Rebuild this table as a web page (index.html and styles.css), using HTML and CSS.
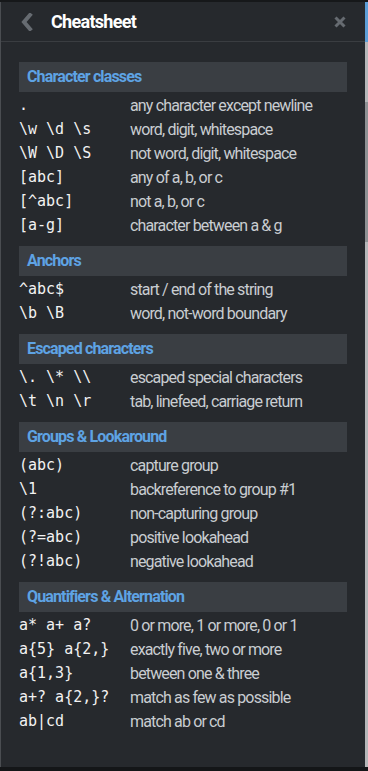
FILE: index.html
```html
<!DOCTYPE html>
<html>
<head>
<meta charset="utf-8">
<link rel="stylesheet" href="styles.css">
</head>
<body>
<div class="frame">
  <div class="topstrip"></div>
  <div class="main">
    <div class="panel">
      <header class="head">
        <svg class="back" width="14" height="18" viewBox="0 0 14 18"><path d="M10 2 L4 9 L10 16" fill="none" stroke="#666b71" stroke-width="4" stroke-linecap="square"/></svg>
        <span class="title">Cheatsheet</span>
        <svg class="close" width="12" height="12" viewBox="0 0 12 12"><path d="M1.5 1.5 L10.5 10.5 M10.5 1.5 L1.5 10.5" stroke="#666b71" stroke-width="3"/></svg>
      </header>
      <div class="content">
        <section class="group">
          <h2 class="ghead">Character classes</h2>
          <div class="row"><code>.</code><span>any character except newline</span></div>
          <div class="row"><code>\w \d \s</code><span>word, digit, whitespace</span></div>
          <div class="row"><code>\W \D \S</code><span>not word, digit, whitespace</span></div>
          <div class="row"><code>[abc]</code><span>any of a, b, or c</span></div>
          <div class="row"><code>[^abc]</code><span>not a, b, or c</span></div>
          <div class="row"><code>[a-g]</code><span>character between a &amp; g</span></div>
        </section>
        <section class="group">
          <h2 class="ghead">Anchors</h2>
          <div class="row"><code>^abc$</code><span>start / end of the string</span></div>
          <div class="row"><code>\b \B</code><span>word, not-word boundary</span></div>
        </section>
        <section class="group">
          <h2 class="ghead">Escaped characters</h2>
          <div class="row"><code>\. \* \\</code><span>escaped special characters</span></div>
          <div class="row"><code>\t \n \r</code><span>tab, linefeed, carriage return</span></div>
        </section>
        <section class="group">
          <h2 class="ghead">Groups &amp; Lookaround</h2>
          <div class="row"><code>(abc)</code><span>capture group</span></div>
          <div class="row"><code>\1</code><span>backreference to group #1</span></div>
          <div class="row"><code>(?:abc)</code><span>non-capturing group</span></div>
          <div class="row"><code>(?=abc)</code><span>positive lookahead</span></div>
          <div class="row"><code>(?!abc)</code><span>negative lookahead</span></div>
        </section>
        <section class="group">
          <h2 class="ghead">Quantifiers &amp; Alternation</h2>
          <div class="row"><code>a* a+ a?</code><span>0 or more, 1 or more, 0 or 1</span></div>
          <div class="row"><code>a{5} a{2,}</code><span>exactly five, two or more</span></div>
          <div class="row"><code>a{1,3}</code><span>between one &amp; three</span></div>
          <div class="row"><code>a+? a{2,}?</code><span>match as few as possible</span></div>
          <div class="row"><code>ab|cd</code><span>match ab or cd</span></div>
        </section>
      </div>
    </div>
    <div class="scrollbar"><div class="sb-top"></div><div class="sb-track"><div class="sb-thumb"></div></div></div>
  </div>
  <div class="bottomstrip"></div>
</div>
</body>
</html>
```
FILE: styles.css
```css
html, body {
  margin: 0;
  padding: 0;
  background: #26292d;
}
.frame {
  width: 368px;
  height: 771px;
  display: flex;
  flex-direction: column;
  overflow: hidden;
}
.topstrip {
  height: 2px;
  background: #16181a;
}
.bottomstrip {
  height: 4px;
  background: #141618;
}
.main {
  flex: 1;
  display: flex;
  min-height: 0;
}
.panel {
  flex: 1;
  background: #26292d;
  border-left: 1px solid #4a4d51;
  display: flex;
  flex-direction: column;
}
.head {
  height: 40px;
  border-bottom: 1px solid #3a3d41;
  display: flex;
  align-items: center;
  padding: 0 19px 0 19px;
  box-sizing: border-box;
}
.back {
  display: block;
}
.title {
  margin-left: 17px;
  font-family: "Roboto", sans-serif;
  font-weight: 700;
  font-size: 18px;
  color: #ffffff;
  letter-spacing: -0.7px;
  flex: 1;
}
.close {
  display: block;
}
.content {
  padding: 20px 18px 0 18px;
}
.group {
  margin-bottom: 10px;
}
.ghead {
  margin: 0;
  height: 30px;
  line-height: 30px;
  background: #3a3e43;
  color: #5ea3e4;
  font-family: "Roboto", sans-serif;
  font-weight: 700;
  font-size: 16px;
  letter-spacing: -0.85px;
  padding-left: 8px;
}
.row {
  height: 24px;
  display: flex;
  align-items: center;
  padding-top: 2px;
  box-sizing: border-box;
}
.row code {
  width: 111px;
  flex: none;
  font-family: "DejaVu Sans Mono", monospace;
  font-size: 15px;
  color: #f2f2f2;
  white-space: pre;
}
.row span {
  font-family: "Roboto", sans-serif;
  font-size: 16px;
  letter-spacing: -0.85px;
  color: #c9cdd1;
}
.scrollbar {
  width: 3px;
  display: flex;
  flex-direction: column;
  background: #b5b7b9;
}
.sb-top {
  height: 40px;
  background: #5d9fd8;
}
.sb-track {
  flex: 1;
  padding-top: 60px;
}
.sb-thumb {
  height: 140px;
  background: #8e9194;
}
```
